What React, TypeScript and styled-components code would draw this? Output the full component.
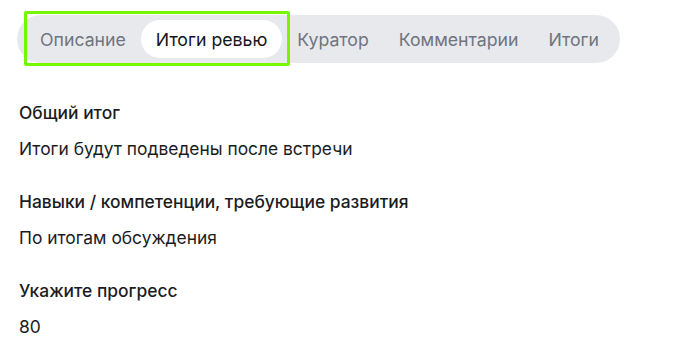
import React, { ReactElement } from 'react';
import styled, { createGlobalStyle } from 'styled-components';

const GlobalStyle = createGlobalStyle`
  html, body {
    margin: 0;
    padding: 0;
    background: #fff;
  }
  body {
    font-family: Inter, "Noto Sans", "Liberation Sans", sans-serif;
    color: #1b1c1f;
  }
`;

const Page = styled.div`
  padding: 15px 18px 0 17px;
`;

const TabsWrap = styled.div`
  position: relative;
  display: inline-block;
`;

const TabBar = styled.div`
  display: flex;
  align-items: center;
  height: 48px;
  box-sizing: border-box;
  padding: 0 6px 0 8px;
  background: #e8e9ed;
  border-radius: 24px;
`;

const Tab = styled.div<{ $active?: boolean }>`
  height: 38px;
  display: flex;
  align-items: center;
  padding: 0 15px;
  border-radius: 19px;
  font-size: 17.7px;
  white-space: nowrap;
  color: ${(p) => (p.$active ? '#15161a' : '#6f7480')};
  background: ${(p) => (p.$active ? '#fff' : 'transparent')};
`;

/* зелёная рамка-выделение поверх первых двух вкладок */
const Highlight = styled.div`
  position: absolute;
  left: 7px;
  top: -4px;
  width: 266px;
  height: 55px;
  box-sizing: border-box;
  border: 3px solid #76f700;
  border-radius: 2px;
  pointer-events: none;
`;

const Fields = styled.div`
  padding: 38px 0 0 2px;
  display: flex;
  flex-direction: column;
  gap: 29px;
`;

const Field = styled.div`
  display: flex;
  flex-direction: column;
  gap: 12px;
`;

const Label = styled.div`
  font-size: 17.4px;
  line-height: 24px;
  font-weight: 500;
`;

const Value = styled.div`
  font-size: 17.4px;
  line-height: 24px;
`;

const tabs = ['Описание', 'Итоги ревью', 'Куратор', 'Комментарии', 'Итоги'];

const fields = [
  { label: 'Общий итог', value: 'Итоги будут подведены после встречи' },
  { label: 'Навыки / компетенции, требующие развития', value: 'По итогам обсуждения' },
  { label: 'Укажите прогресс', value: '80' },
];

const App = (): ReactElement => (
  <Page>
    <GlobalStyle />
    <TabsWrap>
      <TabBar>
        {tabs.map((t) => (
          <Tab key={t} $active={t === 'Итоги ревью'}>{t}</Tab>
        ))}
      </TabBar>
      <Highlight />
    </TabsWrap>

    <Fields>
      {fields.map((f) => (
        <Field key={f.label}>
          <Label>{f.label}</Label>
          <Value>{f.value}</Value>
        </Field>
      ))}
    </Fields>
  </Page>
);

export default App;
